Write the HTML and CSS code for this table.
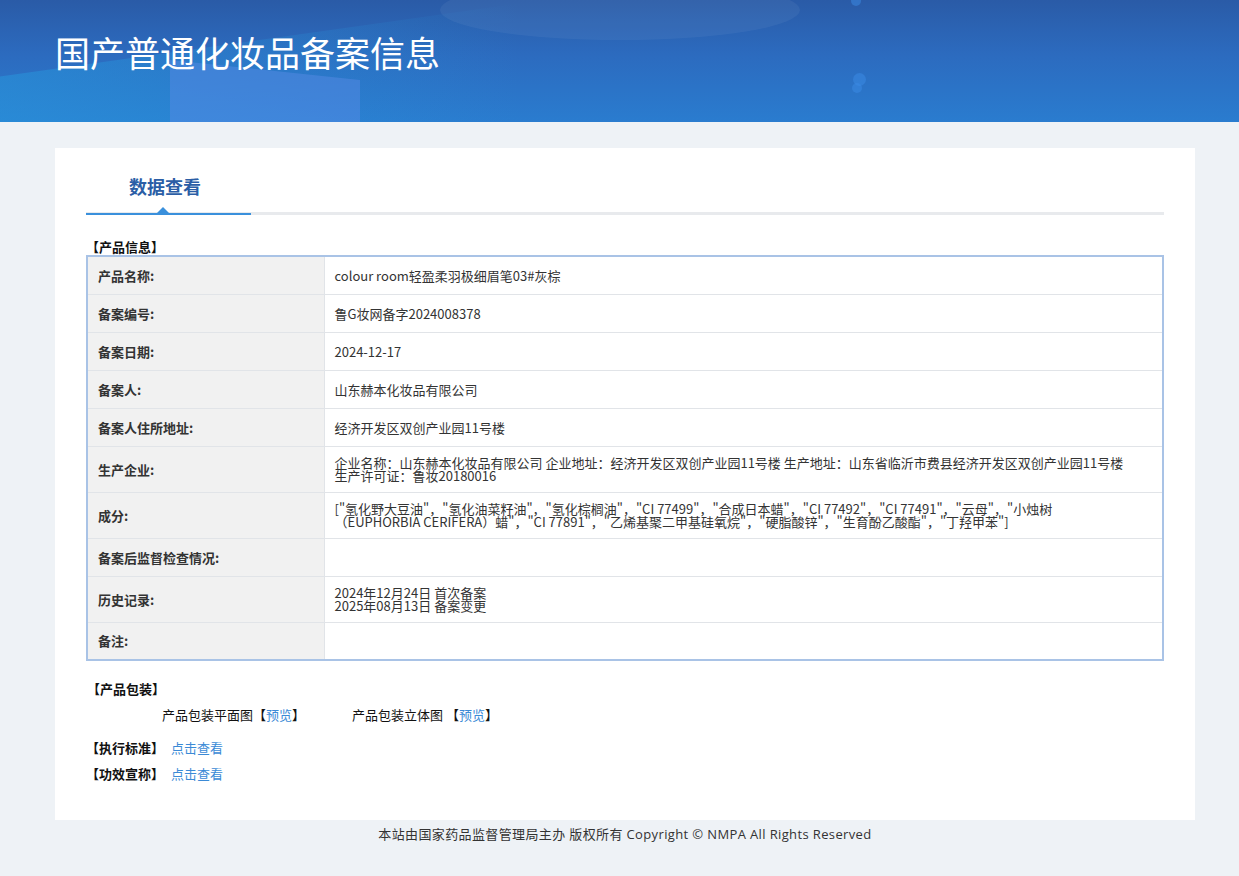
FILE: index.html
```html
<!DOCTYPE html>
<html lang="zh-CN">
<head>
<meta charset="utf-8">
<title>国产普通化妆品备案信息</title>
<link rel="stylesheet" href="styles.css">
</head>
<body>
<header class="banner">
  <div class="deco deco-a"></div>
  <div class="deco deco-b"></div>
  <div class="deco deco-c"></div>
  <div class="deco dot dot1"></div>
  <div class="deco dot dot2"></div>
  <div class="deco dot dot3"></div>
  <h1 class="banner-title">国产普通化妆品备案信息</h1>
</header>
<main class="wrap">
  <section class="card">
    <div class="tabs">
      <div class="tab">数据查看<span class="tab-arrow"></span></div>
    </div>
    <div class="sec-title">【产品信息】</div>
    <table class="info">
      <tr><th>产品名称:</th><td>colour room轻盈柔羽极细眉笔03#灰棕</td></tr>
      <tr><th>备案编号:</th><td>鲁G妆网备字2024008378</td></tr>
      <tr><th>备案日期:</th><td>2024-12-17</td></tr>
      <tr><th>备案人:</th><td>山东赫本化妆品有限公司</td></tr>
      <tr><th>备案人住所地址:</th><td>经济开发区双创产业园11号楼</td></tr>
      <tr class="tall"><th>生产企业:</th><td>企业名称：山东赫本化妆品有限公司 企业地址：经济开发区双创产业园11号楼 生产地址：山东省临沂市费县经济开发区双创产业园11号楼<br>生产许可证：鲁妆20180016</td></tr>
      <tr class="tall"><th>成分:</th><td>["氢化野大豆油"，"氢化油菜籽油"，"氢化棕榈油"，"CI 77499"，"合成日本蜡"，"CI 77492"，"CI 77491"，"云母"，"小烛树<br>（EUPHORBIA CERIFERA）蜡"，"CI 77891"，"乙烯基聚二甲基硅氧烷"，"硬脂酸锌"，"生育酚乙酸酯"，"丁羟甲苯"]</td></tr>
      <tr><th>备案后监督检查情况:</th><td></td></tr>
      <tr class="tall"><th>历史记录:</th><td>2024年12月24日 首次备案<br>2025年08月13日 备案变更</td></tr>
      <tr><th>备注:</th><td></td></tr>
    </table>
    <div class="sec-title pack-title">【产品包装】</div>
    <div class="pack">
      <span class="pack-item">产品包装平面图【<a class="link">预览</a>】</span>
      <span class="pack-item">产品包装立体图 【<a class="link">预览</a>】</span>
    </div>
    <div class="sec-line"><span class="sec-label">【执行标准】</span><a class="link">点击查看</a></div>
    <div class="sec-line"><span class="sec-label">【功效宣称】</span><a class="link">点击查看</a></div>
  </section>
  <footer class="foot">本站由国家药品监督管理局主办 版权所有 Copyright © NMPA All Rights Reserved</footer>
</main>
</body>
</html>
```
FILE: styles.css
```css
* { box-sizing: border-box; }
html, body { margin: 0; padding: 0; }
body {
  background: #eef2f6;
  font-family: "Noto Sans CJK SC", "Open Sans", "Liberation Sans", sans-serif;
  color: #333;
  font-size: 13px;
}
.banner {
  position: relative;
  height: 122px;
  overflow: hidden;
  background: linear-gradient(180deg, #2a5ba7 0%, #2c6bbf 45%, #2a7ccf 100%);
  padding: 30px 0 0 55px;
}
.deco { position: absolute; pointer-events: none; }
.deco-a {
  left: 0; top: 40px; width: 520px; height: 120px;
  background: linear-gradient(90deg, rgba(40,150,220,0.55), rgba(40,140,220,0));
  transform: skewY(-8deg);
}
.deco-b {
  left: 170px; top: 70px; width: 190px; height: 80px;
  background: rgba(90,140,230,0.45);
  transform: skewY(6deg);
}
.deco-c {
  left: 440px; top: -20px; width: 360px; height: 60px;
  border-radius: 50%;
  background: rgba(255,255,255,0.05);
}
.dot { width: 10px; height: 10px; border-radius: 50%; background: rgba(60,140,230,0.5); }
.dot1 { left: 853px; top: 73px; width: 13px; height: 13px; }
.dot2 { left: 851px; top: -4px; }
.dot3 { left: 852px; top: 83px; }
.banner-title {
  position: relative;
  margin: 0;
  color: #fff;
  font-weight: 400;
  font-size: 35px;
  line-height: 44px;
  letter-spacing: 0;
}
.wrap {
  width: 1140px;
  margin-left: 55px;
  padding-top: 26px;
}
.card {
  background: #fff;
  height: 672px;
  padding: 20px 31px 0 31px;
}
.tabs {
  border-bottom: 3px solid #e8eaed;
  height: 47px;
}
.tab {
  position: relative;
  width: 165px;
  height: 47px;
  padding-left: 43px;
  font-size: 18px;
  font-weight: 700;
  color: #2b5ea6;
  line-height: 36px;
  border-bottom: 2px solid #3a90dc;
}
.tab-arrow {
  position: absolute;
  left: 71px;
  bottom: 0;
  width: 0; height: 0;
  border-left: 6px solid transparent;
  border-right: 6px solid transparent;
  border-bottom: 6px solid #3a90dc;
}
.sec-title {
  font-weight: 700;
  font-size: 13px;
  color: #111;
  line-height: 16px;
  margin-top: 24px;
}
.info {
  width: 100%;
  border-collapse: collapse;
  border: 2px solid #a9c3e6;
}
.info th, .info td {
  border: 1px solid #e1e4e8;
  height: 38px;
  font-size: 13px;
  line-height: 13px;
  vertical-align: middle;
}
.info tr.tall th, .info tr.tall td { height: 46px; }
.info th {
  width: 237px;
  background: #f1f1f1;
  text-align: left;
  font-weight: 700;
  padding-left: 10px;
  color: #333;
}
.info td {
  padding-left: 10px;
  color: #333;
}
.pack-title { margin-top: 20px; padding-left: 1px; }
.pack {
  display: flex;
  gap: 47px;
  padding-left: 76px;
  margin-top: 10px;
  line-height: 16px;
  color: #111;
}
.link { color: #3b8ad6; text-decoration: none; }
.sec-line {
  margin-top: 10px;
  padding-left: 0;
  line-height: 16px;
  color: #111;
}
.pack + .sec-line { margin-top: 17px; }
.sec-label { font-weight: 700; margin-right: 7px; }
.foot {
  text-align: center;
  font-family: "Open Sans", "Noto Sans CJK SC", sans-serif;
  font-size: 13px;
  letter-spacing: 0.37px;
  color: #333;
  line-height: 28px;
}
```
